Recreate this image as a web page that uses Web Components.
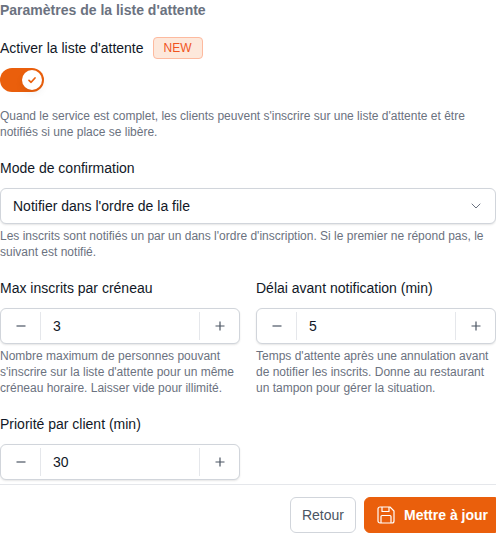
<!DOCTYPE html>
<html lang="fr">
<head>
<meta charset="utf-8">
<meta name="viewport" content="width=device-width, initial-scale=1">
<title>Liste d'attente</title>
<style>
    body {
        margin: 0;
        background: #fff;
        color: #111827;
        font: 14px/20px "Liberation Sans", Arial, sans-serif;
        --primary: #ea5f0c;
        --muted: #6b7280;
        --border: #d1d5db;
        --shadow: 0 1px 2px rgba(0, 0, 0, 0.1);
    }
</style>
</head>
<body>
<waitlist-settings></waitlist-settings>

<script>
// Shared by every field: label row, control, help text
const fieldStyles = `
    :host {
        display: block;
        min-width: 0;
    }
    .label {
        display: flex;
        align-items: center;
        gap: 9px;
        height: 22px;
        margin-bottom: 9px;
    }
    .control {
        box-sizing: border-box;
        display: flex;
        height: 36px;
    }
    .box {
        border: 1px solid var(--border);
        border-radius: 6px;
        background: #fff;
        box-shadow: var(--shadow);
    }
    .box:focus-within {
        border-color: var(--primary);
    }
    input, select, button {
        font: inherit;
        color: inherit;
        outline: none;
    }
    .help {
        margin: 4px 0 0;
        color: var(--muted);
        font-size: 12px;
        line-height: 16px;
    }
    .help:not(.filled) {
        display: none;
    }
`;

class BaseField extends HTMLElement {
    constructor() {
        super();
        this.attachShadow({ mode: 'open' });
    }

    connectedCallback() {
        this.shadowRoot.innerHTML = `
            <style>${fieldStyles}${this.styles()}</style>
            <div class="label">
                <label for="control">${this.getAttribute('label')}</label>
                <slot name="badge"></slot>
            </div>
            ${this.control()}
            <p class="help ${this.textContent.trim() ? 'filled' : ''}"><slot></slot></p>
        `;
        this.bind();
    }

    styles() { return ''; }
    control() { return ''; }
    bind() {}
}

class ToggleField extends BaseField {
    styles() {
        return `
            .switch {
                position: relative;
                width: 44px;
                height: 24px;
            }
            input {
                appearance: none;
                display: block;
                width: 44px;
                height: 24px;
                margin: 0;
                border-radius: 12px;
                background: #e5e7eb;
                cursor: pointer;
            }
            input:checked {
                background: var(--primary);
            }
            .knob {
                position: absolute;
                top: 2px;
                left: 2px;
                width: 20px;
                height: 20px;
                border-radius: 50%;
                background: #fff;
                box-shadow: 0 4px 8px rgba(0, 0, 0, 0.06);
                pointer-events: none;
            }
            .knob svg {
                display: none;
            }
            input:checked + .knob {
                left: auto;
                right: 2px;
            }
            input:checked + .knob svg {
                display: block;
            }
        `;
    }

    control() {
        return `
            <div class="control">
                <div class="switch">
                    <input id="control" type="checkbox" role="switch" ${this.hasAttribute('checked') ? 'checked' : ''}>
                    <span class="knob">
                        <svg width="20" height="20" viewBox="0 0 20 20" fill="none" stroke="#ea5f0c" stroke-width="1.7" stroke-linecap="round" stroke-linejoin="round">
                            <path d="M7 10.4 9.1 12.3 13 8"/>
                        </svg>
                    </span>
                </div>
            </div>
        `;
    }
}

class SelectField extends BaseField {
    styles() {
        return `
            .box {
                display: grid;
                align-items: center;
            }
            select, svg {
                grid-area: 1 / 1;
            }
            select {
                appearance: none;
                width: 100%;
                height: 34px;
                padding: 0 36px 0 12px;
                border: 0;
                background: none;
            }
            svg {
                justify-self: end;
                margin-right: 12px;
                pointer-events: none;
            }
        `;
    }

    control() {
        const options = this.getAttribute('options').split('|');
        return `
            <div class="control box">
                <select id="control">
                    ${options.map(o => `<option>${o}</option>`).join('')}
                </select>
                <svg width="14" height="14" viewBox="0 0 14 14" fill="none" stroke="#6b7280" stroke-linecap="round" stroke-linejoin="round">
                    <path d="M3 5 7 9 11 5"/>
                </svg>
            </div>
        `;
    }
}

class NumberField extends BaseField {
    styles() {
        return `
            .box {
                align-items: stretch;
            }
            button {
                display: flex;
                align-items: center;
                justify-content: center;
                flex: none;
                width: 39px;
                padding: 0;
                border: 0;
                background: none;
                color: #4b5563;
                cursor: pointer;
            }
            input {
                appearance: textfield;
                flex: 1;
                min-width: 0;
                margin: 3px 0;
                padding: 0 12px;
                border: solid #e5e7eb;
                border-width: 0 1px;
                background: none;
            }
            input::-webkit-inner-spin-button {
                display: none;
            }
        `;
    }

    control() {
        return `
            <div class="control box">
                <button type="button" data-step="-1" aria-label="Diminuer">
                    <svg width="10" height="10" viewBox="0 0 10 10" stroke="currentColor" stroke-width="1.2">
                        <path d="M0.5 5H9.5"/>
                    </svg>
                </button>
                <input id="control" type="number" min="0" value="${this.getAttribute('value')}">
                <button type="button" data-step="1" aria-label="Augmenter">
                    <svg width="10" height="10" viewBox="0 0 10 10" stroke="currentColor" stroke-width="1.2">
                        <path d="M0.5 5H9.5M5 0.5V9.5"/>
                    </svg>
                </button>
            </div>
        `;
    }

    bind() {
        const input = this.shadowRoot.querySelector('input');
        this.shadowRoot.querySelectorAll('button').forEach(button => {
            button.addEventListener('click', () => {
                input.value = Math.max(0, Number(input.value) + Number(button.dataset.step));
            });
        });
    }
}

class StatusBadge extends HTMLElement {
    constructor() {
        super();
        this.attachShadow({ mode: 'open' });
        this.shadowRoot.innerHTML = `
            <style>
                :host {
                    display: block;
                    padding: 0 10px;
                    border: 1px solid #fdba9f;
                    border-radius: 4px;
                    background: #fde8db;
                    color: #f0541e;
                    font-size: 12px;
                    line-height: 20px;
                }
            </style>
            <slot></slot>
        `;
    }
}

class ActionButton extends HTMLElement {
    constructor() {
        super();
        this.attachShadow({ mode: 'open' });
        this.shadowRoot.innerHTML = `
            <style>
                :host {
                    display: block;
                }
                button {
                    display: flex;
                    align-items: center;
                    gap: 8px;
                    height: 36px;
                    padding: 0 11px;
                    border: 1px solid var(--border);
                    border-radius: 6px;
                    background: #fff;
                    color: #4b5563;
                    font: inherit;
                    white-space: nowrap;
                    cursor: pointer;
                }
                :host([primary]) button {
                    padding-right: 7px;
                    border-color: var(--primary);
                    border-radius: 6px 0 0 6px;
                    background: var(--primary);
                    color: #fff;
                    font-weight: bold;
                }
            </style>
            <button type="button"><slot name="icon"></slot><slot></slot></button>
        `;
    }
}

class WaitlistSettings extends HTMLElement {
    constructor() {
        super();
        this.attachShadow({ mode: 'open' });
        this.shadowRoot.innerHTML = `
            <style>
                :host {
                    display: block;
                }
                h2 {
                    margin: 0;
                    color: var(--muted);
                    font-size: 14px;
                    line-height: 20px;
                }
                form {
                    display: grid;
                    grid-template-columns: 1fr 1fr;
                    gap: 17px 16px;
                    padding-bottom: 4px;
                }
                .wide {
                    grid-column: 1 / -1;
                }
                footer {
                    display: flex;
                    justify-content: flex-end;
                    gap: 8px;
                    padding: 12px 0;
                    border-top: 1px solid #e5e7eb;
                }
                svg {
                    display: block;
                }
            </style>
            <form>
                <h2 class="wide">Paramètres de la liste d'attente</h2>
                <toggle-field class="wide" label="Activer la liste d'attente" checked>
                    <status-badge slot="badge">NEW</status-badge>
                    Quand le service est complet, les clients peuvent s'inscrire sur une liste d'attente et être notifiés si une place se libère.
                </toggle-field>
                <select-field class="wide" label="Mode de confirmation" options="Notifier dans l'ordre de la file|Notifier tous les inscrits">
                    Les inscrits sont notifiés un par un dans l'ordre d'inscription. Si le premier ne répond pas, le suivant est notifié.
                </select-field>
                <number-field label="Max inscrits par créneau" value="3">
                    Nombre maximum de personnes pouvant s'inscrire sur la liste d'attente pour un même créneau horaire. Laisser vide pour illimité.
                </number-field>
                <number-field label="Délai avant notification (min)" value="5">
                    Temps d'attente après une annulation avant de notifier les inscrits. Donne au restaurant un tampon pour gérer la situation.
                </number-field>
                <number-field label="Priorité par client (min)" value="30"></number-field>
            </form>
            <footer>
                <action-button>Retour</action-button>
                <action-button primary>
                    <svg slot="icon" width="20" height="20" viewBox="0 0 20 20" fill="none" stroke="currentColor" stroke-width="1.2" stroke-linejoin="round">
                        <path d="M4 2H14L18 6V16A2 2 0 0 1 16 18H4A2 2 0 0 1 2 16V4A2 2 0 0 1 4 2Z"/>
                        <path d="M6 2V6.5H13V2"/>
                        <path d="M5 18V11.5A1 1 0 0 1 6 10.5H14A1 1 0 0 1 15 11.5V18"/>
                    </svg>
                    Mettre à jour
                </action-button>
            </footer>
        `;
    }
}

customElements.define('status-badge', StatusBadge);
customElements.define('toggle-field', ToggleField);
customElements.define('select-field', SelectField);
customElements.define('number-field', NumberField);
customElements.define('action-button', ActionButton);
customElements.define('waitlist-settings', WaitlistSettings);
</script>
</body>
</html>
